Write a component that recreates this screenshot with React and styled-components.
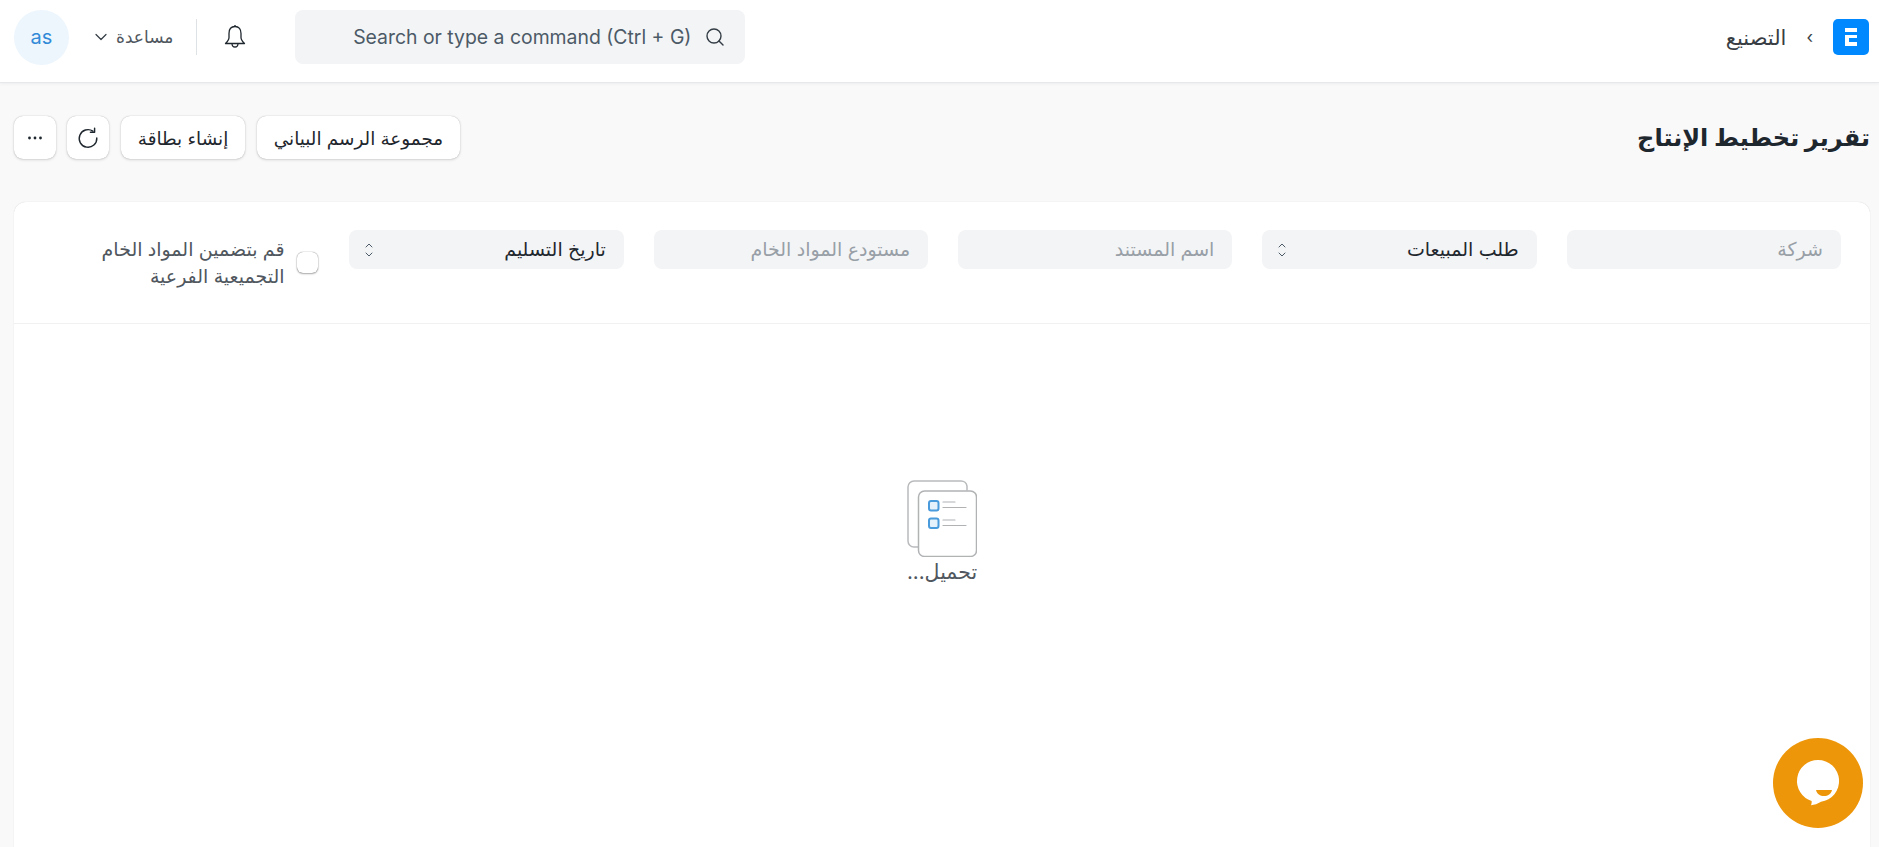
import React from 'react';
import styled, { createGlobalStyle } from 'styled-components';

const GlobalStyle = createGlobalStyle`
  html, body {
    margin: 0;
    padding: 0;
    height: 100%;
    overflow: hidden;
    background: #f9f9fa;
  }
  body {
    font-family: Inter, "DejaVu Sans", sans-serif;
    color: #1f272e;
  }
  * {
    box-sizing: border-box;
  }
`;

const Page = styled.div`
  height: 847px;
  overflow: hidden;
  display: flex;
  flex-direction: column;
`;

const Navbar = styled.header`
  height: 83px;
  flex-shrink: 0;
  background: #fff;
  border-bottom: 1px solid #e6e8ea;
  box-shadow: 0 1px 3px rgba(0, 0, 0, 0.05);
  display: flex;
  align-items: center;
  justify-content: space-between;
  padding: 0 10px 8px 14px;
`;

const Brand = styled.div`
  display: flex;
  align-items: center;
`;

const Logo = styled.div`
  width: 36px;
  height: 36px;
  border-radius: 5px;
  background: #0089ff;
  display: flex;
  align-items: center;
  justify-content: center;
`;

const CrumbSep = styled.span`
  font-size: 17px;
  color: #383e44;
  margin: 0 20px;
`;

const Crumb = styled.span`
  font-size: 21px;
  color: #383e44;
`;

const NavActions = styled.div`
  display: flex;
  align-items: center;
`;

const SearchBox = styled.div`
  width: 450px;
  height: 54px;
  background: #f3f4f6;
  border-radius: 8px;
  display: flex;
  align-items: center;
  gap: 14px;
  padding: 0 20px;
  font-size: 19.4px;
  color: #4c5a67;
  margin-left: 48px;
`;

const IconSlot = styled.span`
  display: inline-flex;
  align-items: center;
  justify-content: center;
  color: #1f272e;
`;

const Divider = styled.div`
  width: 1px;
  height: 36px;
  background: #dfe2e5;
  margin: 0 26px 0 23px;
`;

const HelpMenu = styled.div`
  display: flex;
  align-items: center;
  gap: 9px;
  font-size: 17px;
  color: #50575e;
  margin-left: 26px;
`;

const Avatar = styled.div`
  width: 55px;
  height: 55px;
  border-radius: 50%;
  background: #edf6fd;
  color: #318ad8;
  display: flex;
  align-items: center;
  justify-content: center;
  font-size: 20px;
`;

const PageHead = styled.div`
  height: 119px;
  flex-shrink: 0;
  display: flex;
  align-items: center;
  justify-content: space-between;
  padding: 0 9px 10px 14px;
`;

const Title = styled.h1`
  margin: 0;
  font-size: 24px;
  font-weight: 700;
  color: #1f272e;
`;

const Buttons = styled.div`
  display: flex;
  gap: 11.4px;
`;

const Button = styled.button`
  height: 43px;
  min-width: 42px;
  padding: 0 ${(p) => (p.$icon ? '0' : '17px')};
  border: none;
  border-radius: 9px;
  background: #fff;
  box-shadow: 0 0 1px rgba(0, 0, 0, 0.3), 0 1px 3px rgba(0, 0, 0, 0.14);
  font-family: inherit;
  font-size: 18.4px;
  color: #1f272e;
  display: flex;
  align-items: center;
  justify-content: center;
`;

const Card = styled.section`
  flex: 1;
  margin: 0 9px 0 14px;
  background: #fff;
  border-radius: 12px 12px 0 0;
  box-shadow: 0 0 1px rgba(0, 0, 0, 0.2);
  display: flex;
  flex-direction: column;
`;

const Filters = styled.div`
  height: 122px;
  flex-shrink: 0;
  border-bottom: 1px solid #f0f1f2;
  display: flex;
  gap: 29.8px;
  padding: 28px 29px 0 0;
`;

const Field = styled.div`
  width: 274.5px;
  height: 39px;
  background: #f3f4f6;
  border-radius: 8px;
  display: flex;
  align-items: center;
  justify-content: space-between;
  padding: 0 18px 0 16px;
  font-size: 19px;
  color: ${(p) => (p.$filled ? '#1f272e' : '#989fa6')};
`;

const CheckField = styled.label`
  display: flex;
  align-items: flex-start;
  gap: 12px;
  width: 240px;
  padding-top: 22px;
  margin-right: 2px;
`;

const CheckBox = styled.span`
  width: 21px;
  height: 21px;
  flex-shrink: 0;
  border-radius: 6px;
  background: #fff;
  box-shadow: 0 0 1px rgba(0, 0, 0, 0.6), 0 1px 2px rgba(0, 0, 0, 0.3);
`;

const CheckLabel = styled.span`
  font-size: 19px;
  line-height: 27px;
  color: #50575e;
  margin-top: -16px;
  width: 205px;
`;

const Loading = styled.div`
  flex: 1;
  display: flex;
  flex-direction: column;
  align-items: center;
  padding: 156px 0 0 0;
`;

const LoadingText = styled.div`
  font-size: 20.5px;
  color: #50575e;
  margin-top: 2px;
`;

const ChatBubble = styled.button`
  position: fixed;
  left: 1773px;
  top: 738px;
  width: 90px;
  height: 90px;
  border: none;
  border-radius: 50%;
  padding: 0;
  background: #ee9609;
  display: flex;
  align-items: center;
  justify-content: center;
`;

const LogoMark = () => (
  <svg width="12" height="18" viewBox="0 0 12 18" fill="#fff">
    <path d="M0 0h12v4H0zM0 7h12v3H4v4h8v4H0z" />
  </svg>
);

const SearchIcon = () => (
  <svg width="20" height="20" viewBox="0 0 20 20" fill="none" stroke="#333c44" strokeWidth="1.4" strokeLinecap="round">
    <circle cx="9" cy="9" r="7" />
    <path d="M14 14l4 4" />
  </svg>
);

const BellIcon = () => (
  <svg width="24" height="26" viewBox="0 0 24 26" fill="none" stroke="#1f272e" strokeWidth="1.3" strokeLinejoin="round">
    <path d="M12 2.500c-4 0-6 3-6 7v4c0 2.500-1.500 4-3.500 6h19c-2-2-3.500-3.500-3.500-6v-4c0-4-2-7-6-7z" />
    <path d="M9 19.500c0 2.200 1.300 3.500 3 3.500s3-1.300 3-3.500" />
    <path d="M12 1v1.500" />
  </svg>
);

const ChevronDown = () => (
  <svg width="12" height="8" viewBox="0 0 12 8" fill="none" stroke="#333c44" strokeWidth="1.2" strokeLinecap="round" strokeLinejoin="round">
    <path d="M1 1.500l5 5 5-5" />
  </svg>
);

const RefreshIcon = () => (
  <svg width="22" height="22" viewBox="0 0 20 20" fill="none" stroke="#1f272e" strokeWidth="1.3" strokeLinecap="round" strokeLinejoin="round">
    <path d="M14.500 3.800A8 8 0 1 0 18 10" />
    <path d="M16 1v3.800h-3.800" />
  </svg>
);

const DotsIcon = () => (
  <svg width="16" height="4" viewBox="0 0 16 4" fill="#1f272e">
    <circle cx="2.500" cy="2" r="1.400" />
    <circle cx="8" cy="2" r="1.400" />
    <circle cx="13.500" cy="2" r="1.400" />
  </svg>
);

const UpDownIcon = () => (
  <svg width="8" height="16" viewBox="0 0 8 16" fill="none" stroke="#4c5a67" strokeWidth="1" strokeLinecap="round" strokeLinejoin="round">
    <path d="M1 5l3-3 3 3M1 11l3 3 3-3" />
  </svg>
);

const ListIcon = () => (
  <svg width="70" height="77" viewBox="0 0 70 77" fill="none" strokeLinecap="round">
    <path d="M11 67H7a6 6 0 0 1-6-6V7a6 6 0 0 1 6-6h47a6 6 0 0 1 6 5v4" stroke="#b8babc" strokeWidth="1.500" />
    <rect x="11.500" y="11" width="58" height="65.500" rx="6" fill="#fff" stroke="#b0b2b4" strokeWidth="1.500" />
    <rect x="22" y="21" width="9.500" height="9.500" rx="2" stroke="#4a9bdc" strokeWidth="2" fill="#e5f1fb" />
    <rect x="22" y="38.500" width="9.500" height="9.500" rx="2" stroke="#4a9bdc" strokeWidth="2" fill="#e5f1fb" />
    <path d="M36 22h12M36 27.500h23M36 40h12M36 45.500h23" stroke="#b0b2b4" strokeWidth="1.200" />
  </svg>
);

const ChatIcon = () => (
  <svg width="90" height="90" viewBox="0 0 90 90">
    <path d="M45 22a21 21 0 0 1 3 41.800c-3 2-7 3.300-10 3.400 .6-1.300.8-3 .6-4.200A21 21 0 0 1 45 22z" fill="#fff" />
    <path d="M43 52h16c-1 4-4 6-8 6s-7-2-8-6z" fill="#ee9609" />
  </svg>
);

export default function App() {
  return (
    <Page dir="rtl">
      <GlobalStyle />
      <Navbar>
        <Brand>
          <Logo><LogoMark /></Logo>
          <CrumbSep>›</CrumbSep>
          <Crumb>التصنيع</Crumb>
        </Brand>
        <NavActions>
          <SearchBox>
            <IconSlot><SearchIcon /></IconSlot>
            <span dir="ltr">Search or type a command (Ctrl + G)</span>
          </SearchBox>
          <IconSlot><BellIcon /></IconSlot>
          <Divider />
          <HelpMenu>
            مساعدة
            <ChevronDown />
          </HelpMenu>
          <Avatar>as</Avatar>
        </NavActions>
      </Navbar>
      <PageHead>
        <Title>تقرير تخطيط الإنتاج</Title>
        <Buttons>
          <Button>مجموعة الرسم البياني</Button>
          <Button>إنشاء بطاقة</Button>
          <Button $icon><RefreshIcon /></Button>
          <Button $icon><DotsIcon /></Button>
        </Buttons>
      </PageHead>
      <Card>
        <Filters>
          <Field>شركة</Field>
          <Field $filled>طلب المبيعات<UpDownIcon /></Field>
          <Field>اسم المستند</Field>
          <Field>مستودع المواد الخام</Field>
          <Field $filled>تاريخ التسليم<UpDownIcon /></Field>
          <CheckField>
            <CheckBox />
            <CheckLabel>قم بتضمين المواد الخام التجميعية الفرعية</CheckLabel>
          </CheckField>
        </Filters>
        <Loading>
          <ListIcon />
          <LoadingText>تحميل...</LoadingText>
        </Loading>
      </Card>
      <ChatBubble><ChatIcon /></ChatBubble>
    </Page>
  );
}
